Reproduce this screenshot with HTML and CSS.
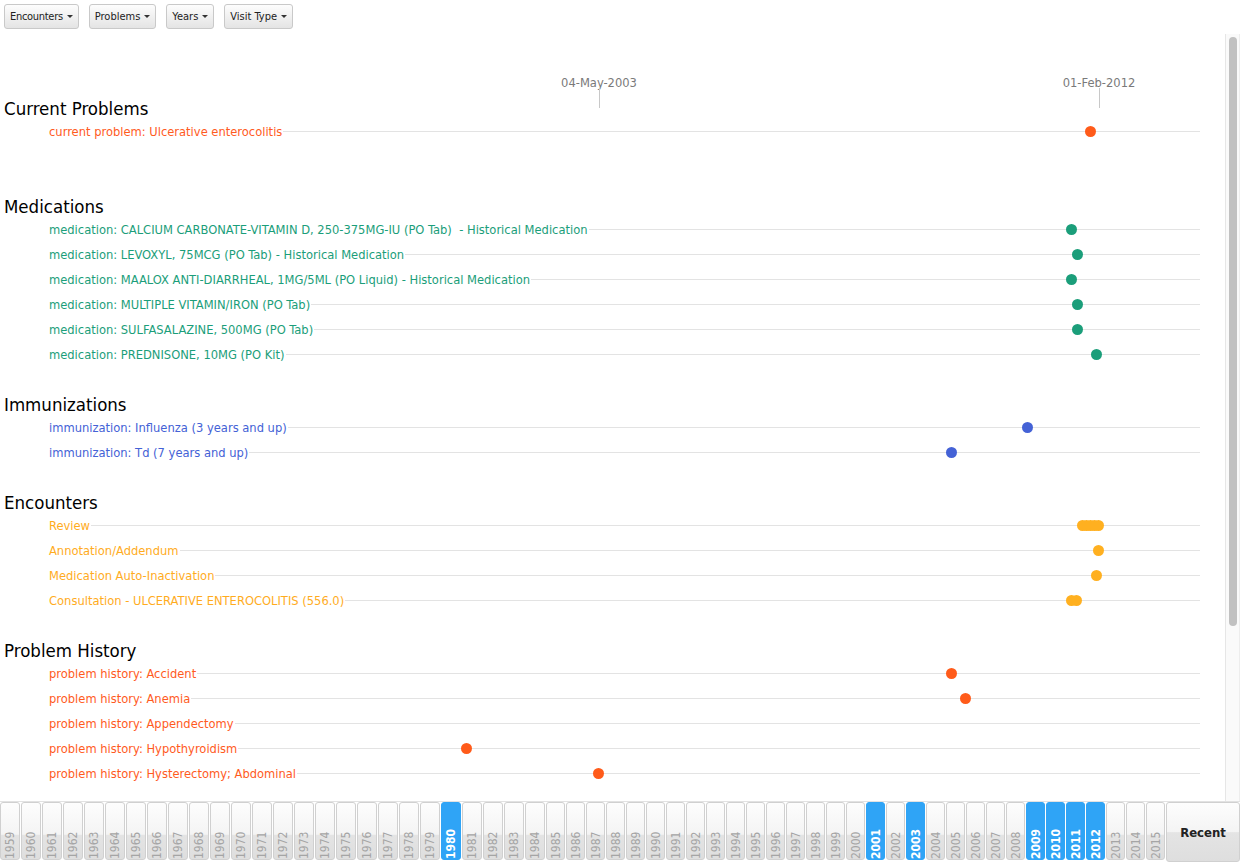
FILE: index.html
```html
<!DOCTYPE html>
<html>
<head>
<meta charset="utf-8">
<title>Patient Timeline</title>
<link rel="stylesheet" href="styles.css">
</head>
<body>
<div class="toolbar">
  <button class="dd">Encounters <span class="caret"></span></button>
  <button class="dd">Problems <span class="caret"></span></button>
  <button class="dd">Years <span class="caret"></span></button>
  <button class="dd">Visit Type <span class="caret"></span></button>
</div>

<div class="frame">
  <div class="viewport">
    <div class="chart">
      <div class="axis">
        <div class="tick" style="left:599px"><span>04-May-2003</span></div>
        <div class="tick" style="left:1099px"><span>01-Feb-2012</span></div>
      </div>

      <section class="group problem">
        <h2>Current Problems</h2>
        <div class="row"><span class="label">current problem: Ulcerative enterocolitis</span><span class="rule"></span><i class="dot" style="left:1090px"></i></div>
        <div class="row empty"></div>
      </section>

      <section class="group med">
        <h2>Medications</h2>
        <div class="row"><span class="label">medication: CALCIUM CARBONATE-VITAMIN D, 250-375MG-IU (PO Tab)  - Historical Medication</span><span class="rule"></span><i class="dot" style="left:1071px"></i></div>
        <div class="row"><span class="label">medication: LEVOXYL, 75MCG (PO Tab) - Historical Medication</span><span class="rule"></span><i class="dot" style="left:1077px"></i></div>
        <div class="row"><span class="label">medication: MAALOX ANTI-DIARRHEAL, 1MG/5ML (PO Liquid) - Historical Medication</span><span class="rule"></span><i class="dot" style="left:1071px"></i></div>
        <div class="row"><span class="label">medication: MULTIPLE VITAMIN/IRON (PO Tab)</span><span class="rule"></span><i class="dot" style="left:1077px"></i></div>
        <div class="row"><span class="label">medication: SULFASALAZINE, 500MG (PO Tab)</span><span class="rule"></span><i class="dot" style="left:1077px"></i></div>
        <div class="row"><span class="label">medication: PREDNISONE, 10MG (PO Kit)</span><span class="rule"></span><i class="dot" style="left:1096px"></i></div>
      </section>

      <section class="group imm">
        <h2>Immunizations</h2>
        <div class="row"><span class="label">immunization: Influenza (3 years and up)</span><span class="rule"></span><i class="dot" style="left:1027px"></i></div>
        <div class="row"><span class="label">immunization: Td (7 years and up)</span><span class="rule"></span><i class="dot" style="left:951px"></i></div>
      </section>

      <section class="group enc">
        <h2>Encounters</h2>
        <div class="row"><span class="label">Review</span><span class="rule"></span><i class="dot" style="left:1082px"></i><i class="dot" style="left:1086px"></i><i class="dot" style="left:1090px"></i><i class="dot" style="left:1094px"></i><i class="dot" style="left:1098px"></i></div>
        <div class="row"><span class="label">Annotation/Addendum</span><span class="rule"></span><i class="dot" style="left:1098px"></i></div>
        <div class="row"><span class="label">Medication Auto-Inactivation</span><span class="rule"></span><i class="dot" style="left:1096px"></i></div>
        <div class="row"><span class="label">Consultation - ULCERATIVE ENTEROCOLITIS (556.0)</span><span class="rule"></span><i class="dot" style="left:1071px"></i><i class="dot" style="left:1076px"></i></div>
      </section>

      <section class="group problem">
        <h2>Problem History</h2>
        <div class="row"><span class="label">problem history: Accident</span><span class="rule"></span><i class="dot" style="left:951px"></i></div>
        <div class="row"><span class="label">problem history: Anemia</span><span class="rule"></span><i class="dot" style="left:965px"></i></div>
        <div class="row"><span class="label">problem history: Appendectomy</span><span class="rule"></span></div>
        <div class="row"><span class="label">problem history: Hypothyroidism</span><span class="rule"></span><i class="dot" style="left:466px"></i></div>
        <div class="row"><span class="label">problem history: Hysterectomy; Abdominal</span><span class="rule"></span><i class="dot" style="left:598px"></i></div>
      </section>
    </div>
  </div>
  <div class="scrollbar"><div class="thumb"></div></div>
</div>

<div class="years">
  <div class="yr"><span>1959</span></div>
  <div class="yr"><span>1960</span></div>
  <div class="yr"><span>1961</span></div>
  <div class="yr"><span>1962</span></div>
  <div class="yr"><span>1963</span></div>
  <div class="yr"><span>1964</span></div>
  <div class="yr"><span>1965</span></div>
  <div class="yr"><span>1966</span></div>
  <div class="yr"><span>1967</span></div>
  <div class="yr"><span>1968</span></div>
  <div class="yr"><span>1969</span></div>
  <div class="yr"><span>1970</span></div>
  <div class="yr"><span>1971</span></div>
  <div class="yr"><span>1972</span></div>
  <div class="yr"><span>1973</span></div>
  <div class="yr"><span>1974</span></div>
  <div class="yr"><span>1975</span></div>
  <div class="yr"><span>1976</span></div>
  <div class="yr"><span>1977</span></div>
  <div class="yr"><span>1978</span></div>
  <div class="yr"><span>1979</span></div>
  <div class="yr on"><span>1980</span></div>
  <div class="yr"><span>1981</span></div>
  <div class="yr"><span>1982</span></div>
  <div class="yr"><span>1983</span></div>
  <div class="yr"><span>1984</span></div>
  <div class="yr"><span>1985</span></div>
  <div class="yr"><span>1986</span></div>
  <div class="yr"><span>1987</span></div>
  <div class="yr"><span>1988</span></div>
  <div class="yr"><span>1989</span></div>
  <div class="yr"><span>1990</span></div>
  <div class="yr"><span>1991</span></div>
  <div class="yr"><span>1992</span></div>
  <div class="yr"><span>1993</span></div>
  <div class="yr"><span>1994</span></div>
  <div class="yr"><span>1995</span></div>
  <div class="yr"><span>1996</span></div>
  <div class="yr"><span>1997</span></div>
  <div class="yr"><span>1998</span></div>
  <div class="yr"><span>1999</span></div>
  <div class="yr"><span>2000</span></div>
  <div class="yr on"><span>2001</span></div>
  <div class="yr"><span>2002</span></div>
  <div class="yr on"><span>2003</span></div>
  <div class="yr"><span>2004</span></div>
  <div class="yr"><span>2005</span></div>
  <div class="yr"><span>2006</span></div>
  <div class="yr"><span>2007</span></div>
  <div class="yr"><span>2008</span></div>
  <div class="yr on"><span>2009</span></div>
  <div class="yr on"><span>2010</span></div>
  <div class="yr on"><span>2011</span></div>
  <div class="yr on"><span>2012</span></div>
  <div class="yr"><span>2013</span></div>
  <div class="yr"><span>2014</span></div>
  <div class="yr"><span>2015</span></div>
  <div class="recent">Recent</div>
</div>
</body>
</html>
```

FILE: styles.css
```css
html, body {
  margin: 0;
  padding: 0;
  background: #fff;
  overflow: hidden;
}
body {
  font-family: "DejaVu Sans Condensed", "DejaVu Sans", sans-serif;
  width: 1240px;
  height: 862px;
}

/* toolbar */
.toolbar {
  height: 34px;
  box-sizing: border-box;
  padding: 4px 0 0 4px;
  display: flex;
  gap: 10px;
  align-items: flex-start;
}
.dd {
  height: 25px;
  box-sizing: border-box;
  padding: 0 5px;
  font-family: "DejaVu Sans Condensed", "DejaVu Sans", sans-serif;
  font-size: 11px;
  color: #222;
  background: linear-gradient(#fdfdfd, #e4e4e4);
  border: 1px solid #c9c9c9;
  border-radius: 3px;
  display: flex;
  align-items: center;
  gap: 4px;
}
.dd:first-child {
  letter-spacing: -0.3px;
}
.caret {
  width: 0;
  height: 0;
  border-left: 3px solid transparent;
  border-right: 3px solid transparent;
  border-top: 3px solid #333;
}

/* scroll frame */
.frame {
  height: 768px;
  display: flex;
  border-bottom: 1px solid #e2e2e2;
  box-sizing: border-box;
}
.viewport {
  flex: 1;
  overflow: hidden;
}
.scrollbar {
  width: 15px;
  flex: none;
  box-sizing: border-box;
  background: #fafafa;
  border-left: 1px solid #e6e6e6;
  border-right: 1px solid #ededed;
  padding: 3px 2px 0 3px;
}
.thumb {
  height: 589px;
  background: #c1c1c1;
  border-radius: 4px;
}

.chart {
  width: 1200px;
}

/* date axis */
.axis {
  position: relative;
  height: 63px;
}
.tick {
  position: absolute;
  top: 0;
  width: 0;
  height: 63px;
}
.tick span {
  position: absolute;
  top: 42px;
  left: 0;
  transform: translateX(-50%);
  font-size: 12.8px;
  line-height: 14px;
  color: #7a7a7a;
  white-space: nowrap;
}
.tick::after {
  content: "";
  position: absolute;
  top: 54px;
  left: 0;
  width: 1px;
  height: 20px;
  background: #c8c8c8;
}

/* groups */
.group {
  margin-bottom: 26px;
}
.group h2 {
  margin: 0;
  height: 22px;
  box-sizing: border-box;
  padding: 1px 0 0 4px;
  line-height: 22px;
  font-size: 18.5px;
  font-weight: normal;
  color: #000;
}
.row {
  position: relative;
  height: 25px;
  display: flex;
  align-items: center;
  padding-left: 49px;
  font-size: 12.8px;
}
.label {
  white-space: pre;
}
.rule {
  flex: 1;
  height: 1px;
  background: #e3e3e3;
  margin-left: 1px;
}
.dot {
  position: absolute;
  top: 50%;
  width: 11px;
  height: 11px;
  margin: -5.5px 0 0 -5.5px;
  border-radius: 50%;
}

.problem .label { color: #ff5b1e; }
.problem .dot { background: #ff5b1a; }
.med .label { color: #1b9e7a; }
.med .dot { background: #1b9e7a; }
.imm .label { color: #4462d6; }
.imm .dot { background: #4462d6; }
.enc .label { color: #ffac1e; }
.enc .dot { background: #ffb020; }

/* year selector */
.years {
  display: flex;
  gap: 1px;
  height: 60px;
  box-sizing: border-box;
  padding-bottom: 2px;
}
.yr {
  flex: none;
  width: 19px;
  box-sizing: border-box;
  border: 1px solid #d0d0d0;
  border-radius: 3px;
  background: linear-gradient(#fdfdfd, #f4f4f4 56%, #e4e4e4 57%, #dedede);
  color: #a5a5a5;
  font-size: 12px;
  display: flex;
  justify-content: center;
  padding-top: 9px;
}
.yr:nth-child(-n+26) {
  width: 20px;
}
.yr span {
  writing-mode: vertical-rl;
  transform: rotate(180deg);
  line-height: 1;
}
.yr.on {
  background: #2fa4f6;
  border-color: #2fa4f6;
  color: #fff;
  font-weight: bold;
}
.recent {
  flex: 1;
  height: 60px;
  margin-bottom: -2px;
  box-sizing: border-box;
  border: 1px solid #d0d0d0;
  border-radius: 3px;
  background: linear-gradient(#fdfdfd, #f4f4f4 50%, #e4e4e4 51%, #dedede);
  font-size: 13px;
  font-weight: bold;
  color: #222;
  display: flex;
  align-items: center;
  justify-content: center;
}
```
